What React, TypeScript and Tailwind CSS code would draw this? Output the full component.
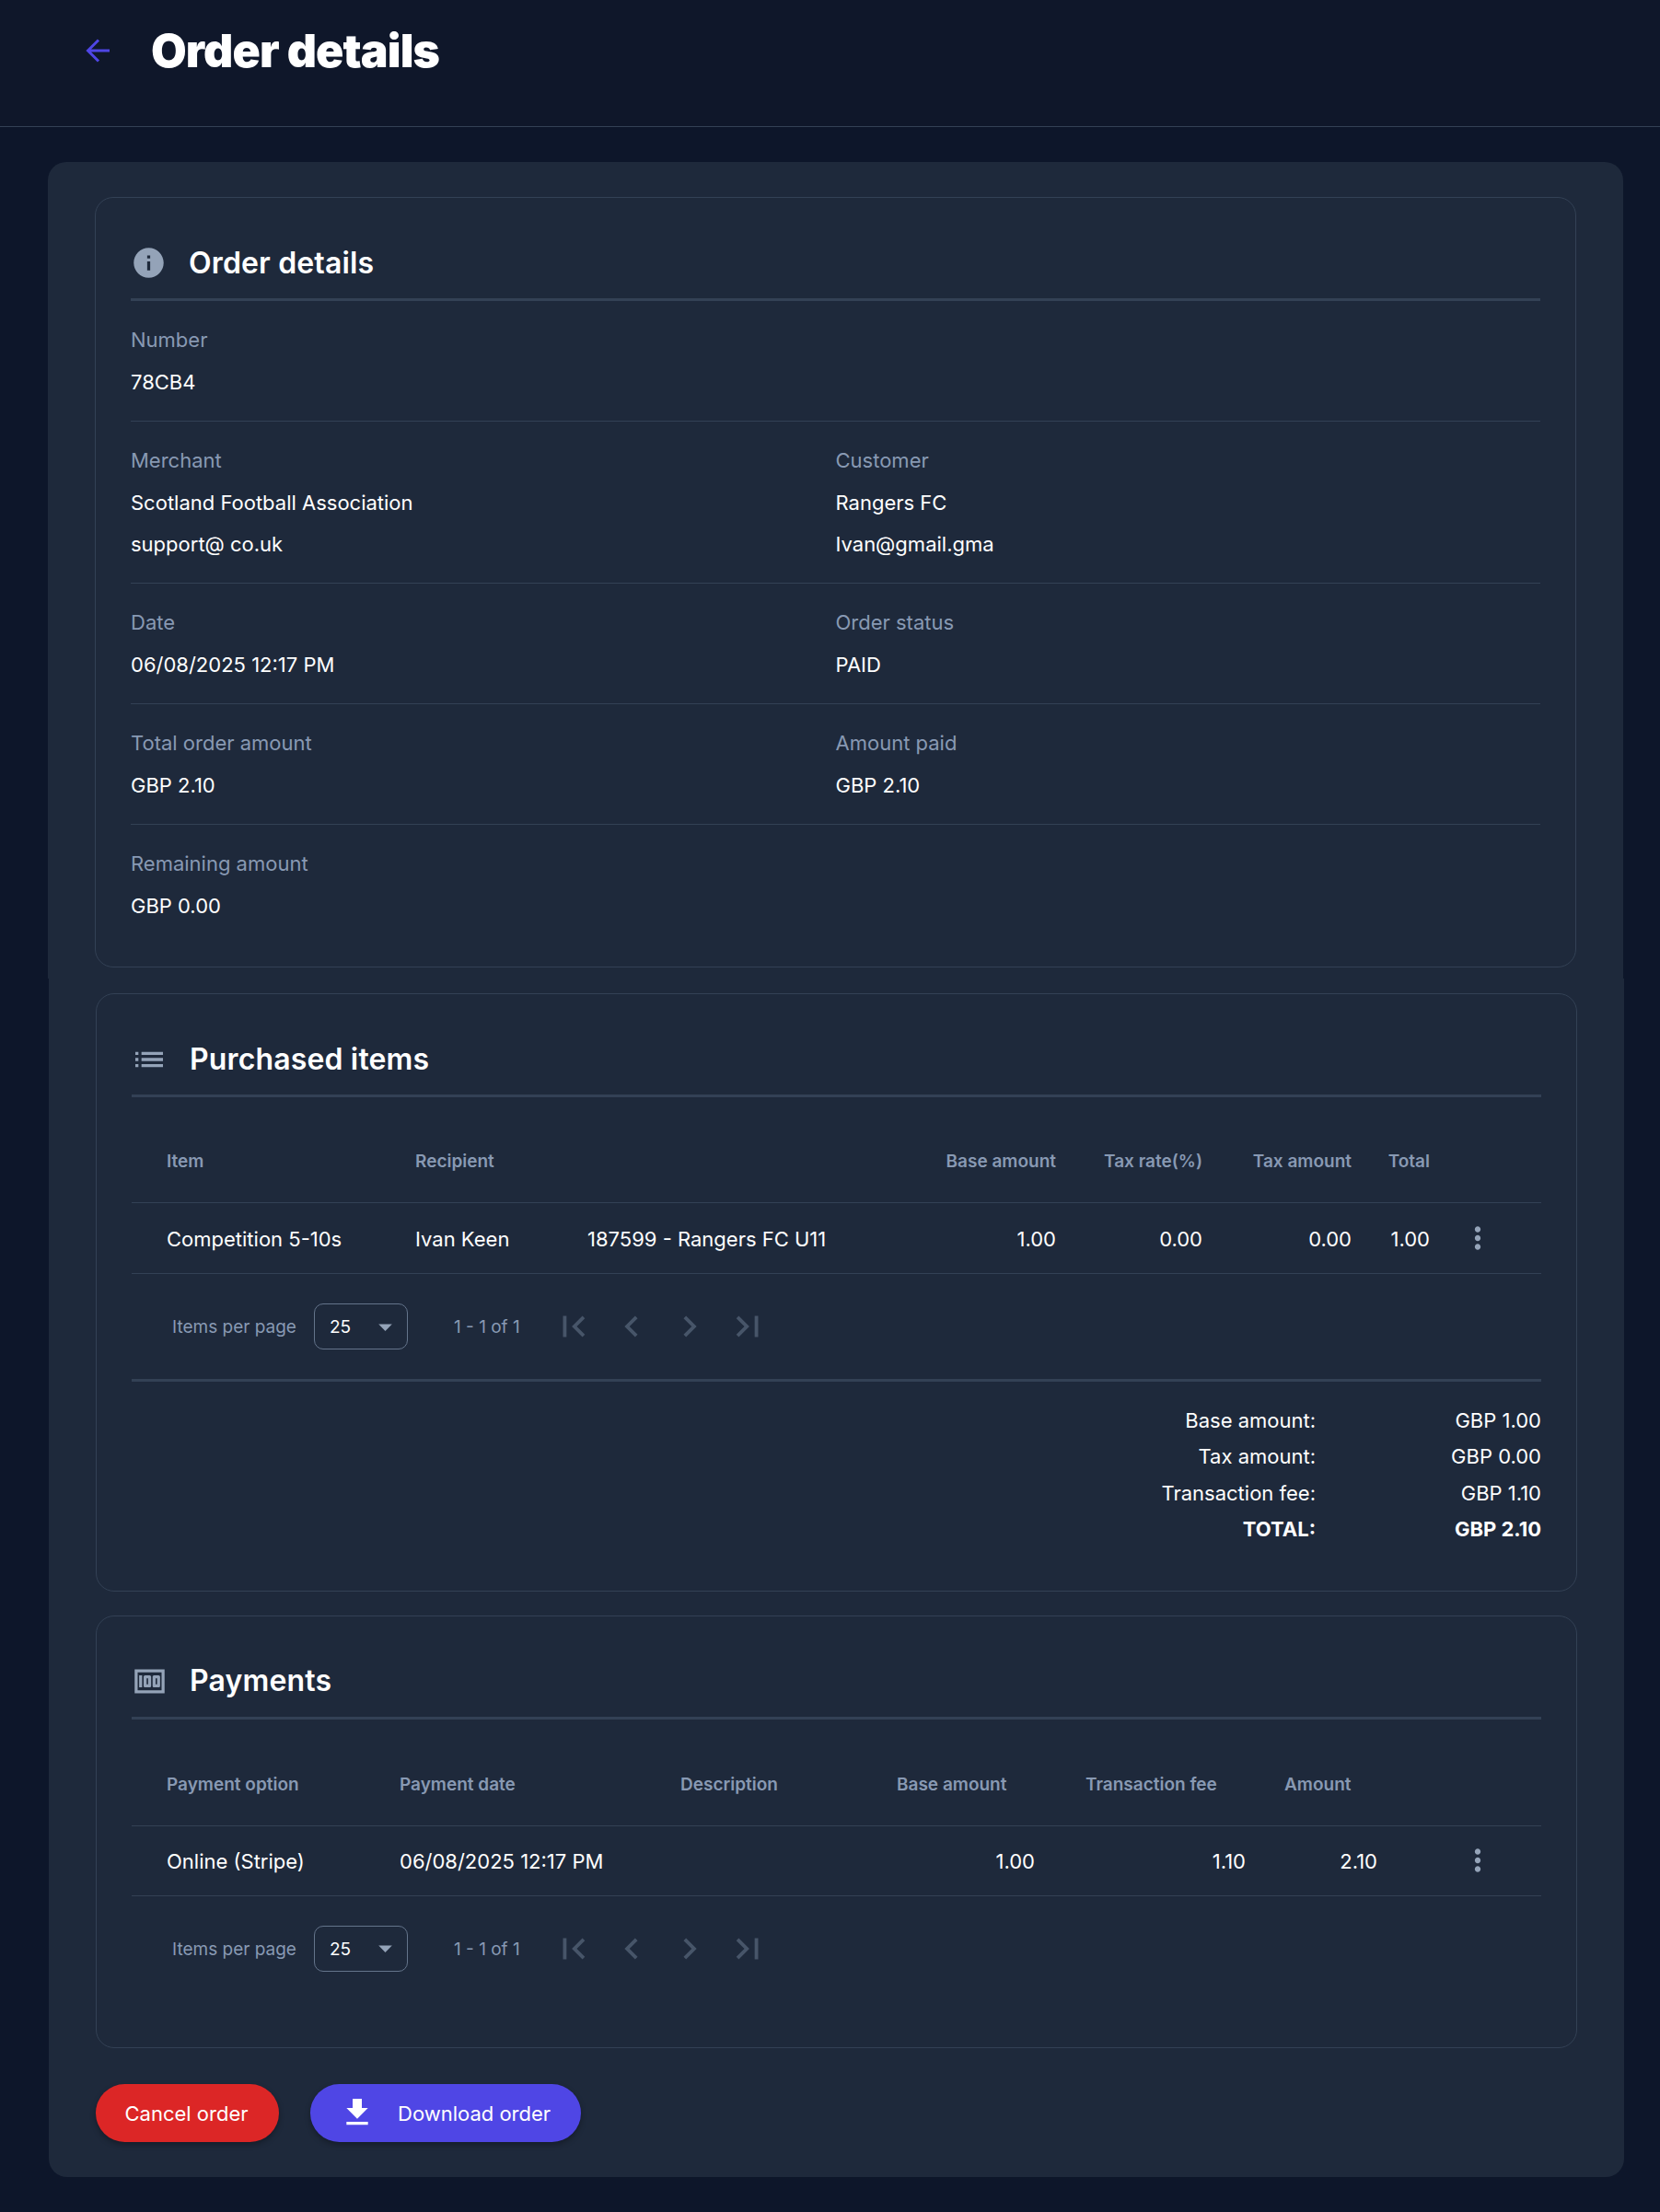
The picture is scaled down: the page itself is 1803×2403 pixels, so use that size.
import React from "react";
import {
  MdInfo,
  MdList,
  MdMoney,
  MdMoreVert,
  MdFileDownload,
  MdFirstPage,
  MdLastPage,
  MdChevronLeft,
  MdChevronRight,
  MdArrowDropDown,
} from "react-icons/md";

function Field({ label, lines }: { label: string; lines: string[] }) {
  return (
    <div>
      <div className="h-[46px] leading-[46px] text-[#8899b3]">{label}</div>
      {lines.map((l) => (
        <div key={l} className="h-[45px] leading-[47px] text-white">
          {l}
        </div>
      ))}
    </div>
  );
}

function Row({ children, last }: { children: React.ReactNode; last?: boolean }) {
  return (
    <div className={`grid grid-cols-2 pt-[19px] pb-[20px] ${last ? "" : "border-b border-[#334155]"}`}>{children}</div>
  );
}

function CardHeader({ icon, title }: { icon: React.ReactNode; title: string }) {
  return (
    <div className="flex items-center h-[112px] pt-[32px] border-b-[3px] border-[#334155]">
      <div className="w-[63px] flex items-center text-[#94a3b8]">{icon}</div>
      <h2 className="text-[32px] font-semibold text-white tracking-[0.15px]">{title}</h2>
    </div>
  );
}

function Paginator() {
  return (
    <div className="flex items-center h-[114px] pl-[44px] text-[19px]">
      <span className="text-[#8899b3] w-[154px] pt-[2px]">Items per page</span>
      <div className="w-[102px] h-[50px] rounded-[10px] border border-[#64748b] flex items-center justify-between pl-[16px] pr-[6px] text-white">
        <span className="pt-[2px]">25</span>
        <MdArrowDropDown size={35} className="text-[#94a3b8]" />
      </div>
      <span className="text-[#8899b3] ml-[50px] w-[107px] pt-[2px]">1 - 1 of 1</span>
      <div className="flex items-center gap-[17px] text-[#475569]">
        <MdFirstPage size={46} />
        <MdChevronLeft size={46} />
        <MdChevronRight size={46} />
        <MdLastPage size={46} />
      </div>
    </div>
  );
}

const itemCols = "grid grid-cols-[308px_187px_362px_147px_159px_162px_85px_121px]";
const payCols = "grid grid-cols-[291px_305px_235px_205px_216px_158px_121px]";

export default function App() {
  return (
    <div
      className="min-h-[2403px] bg-[#0d162a] text-[22px]"
      style={{ fontFamily: 'Inter, "Liberation Sans", sans-serif' }}
    >
      <header className="h-[138px] bg-[#0f172a] border-b border-[#334155] flex items-start pt-[25px] pl-[93px]">
        <svg width="27" height="26" viewBox="0 0 27 26" fill="none" stroke="#4f46e5" strokeWidth="3" className="mt-[17px] w-[27px] h-[26px]">
          <path d="M26 13H3M14 1.5 2.5 13 14 24.5" />
        </svg>
        <h1 className="ml-[44px] text-[50px] leading-[60px] font-black text-white tracking-[-0.9px]">Order details</h1>
      </header>

      <main className="mt-[38px]">
        <div className="ml-[52px] w-[1711px] bg-[#1e293b] rounded-t-[20px] pt-[38px] pb-[12px] px-[51px]">
          <section className="rounded-[20px] border border-[#334155] px-[38px] pb-[24px]">
            <CardHeader icon={<MdInfo size={39} />} title="Order details" />
            <Row>
              <Field label="Number" lines={["78CB4"]} />
            </Row>
            <Row>
              <Field label="Merchant" lines={["Scotland Football Association", "support@ co.uk"]} />
              <Field label="Customer" lines={["Rangers FC", "Ivan@gmail.gma"]} />
            </Row>
            <Row>
              <Field label="Date" lines={["06/08/2025 12:17 PM"]} />
              <Field label="Order status" lines={["PAID"]} />
            </Row>
            <Row>
              <Field label="Total order amount" lines={["GBP 2.10"]} />
              <Field label="Amount paid" lines={["GBP 2.10"]} />
            </Row>
            <Row last>
              <Field label="Remaining amount" lines={["GBP 0.00"]} />
            </Row>
          </section>
        </div>

        <div className="ml-[53px] w-[1711px] bg-[#1e293b] rounded-b-[20px] pt-[16px] pb-[38px] px-[51px]">
          <section className="rounded-[20px] border border-[#334155] px-[38px] pb-[46.68px]">
            <CardHeader icon={<MdList size={40} className="-ml-[1px]" />} title="Purchased items" />
            <div className={`${itemCols} items-center h-[115px] pt-[26px] border-b border-[#334155] text-[19px] font-semibold text-[#8899b3]`}>
              <div className="pl-[38px]">Item</div>
              <div>Recipient</div>
              <div />
              <div className="text-right">Base amount</div>
              <div className="text-right">Tax rate(%)</div>
              <div className="text-right">Tax amount</div>
              <div className="text-right">Total</div>
              <div />
            </div>
            <div className={`${itemCols} items-center h-[77px] border-b border-[#334155] text-white`}>
              <div className="pl-[38px] pt-[2px]">Competition 5-10s</div>
              <div className="pt-[2px]">Ivan Keen</div>
              <div className="pt-[2px]">187599 - Rangers FC U11</div>
              <div className="text-right pt-[2px]">1.00</div>
              <div className="text-right pt-[2px]">0.00</div>
              <div className="text-right pt-[2px]">0.00</div>
              <div className="text-right pt-[2px]">1.00</div>
              <div className="pl-[33px] text-[#94a3b8]"><MdMoreVert size={38} /></div>
            </div>
            <div className="border-b-[3px] border-[#334155]">
              <Paginator />
            </div>
            <div className="pt-[23px] grid grid-cols-[1fr_245px] text-white text-right leading-[39.33px]">
              <div>Base amount:</div>
              <div>GBP 1.00</div>
              <div>Tax amount:</div>
              <div>GBP 0.00</div>
              <div>Transaction fee:</div>
              <div>GBP 1.10</div>
              <div className="font-bold">TOTAL:</div>
              <div className="font-bold">GBP 2.10</div>
            </div>
          </section>

          <section className="mt-[26px] rounded-[20px] border border-[#334155] px-[38px] pb-[50px]">
            <CardHeader icon={<MdMoney size={39} />} title="Payments" />
            <div className={`${payCols} items-center h-[116px] pt-[28px] border-b border-[#334155] text-[19px] font-semibold text-[#8899b3]`}>
              <div className="pl-[38px]">Payment option</div>
              <div>Payment date</div>
              <div>Description</div>
              <div>Base amount</div>
              <div>Transaction fee</div>
              <div>Amount</div>
              <div />
            </div>
            <div className={`${payCols} items-center h-[76px] border-b border-[#334155] text-white`}>
              <div className="pl-[38px] pt-[2px]">Online (Stripe)</div>
              <div className="pt-[2px]">06/08/2025 12:17 PM</div>
              <div />
              <div className="text-right pr-[55px] pt-[2px]">1.00</div>
              <div className="text-right pr-[42px] pt-[2px]">1.10</div>
              <div className="text-right pr-[57px] pt-[2px]">2.10</div>
              <div className="pl-[33px] text-[#94a3b8]"><MdMoreVert size={38} /></div>
            </div>
            <Paginator />
          </section>

          <div className="mt-[39px] flex gap-[34px]">
            <button className="h-[63px] w-[199px] pt-[2px] pr-[2px] rounded-full bg-[#dc2626] text-white shadow-[0_3px_6px_rgba(0,0,0,0.3)]">Cancel order</button>
            <button className="h-[63px] w-[294px] rounded-full bg-[#4f46e5] text-white shadow-[0_3px_6px_rgba(0,0,0,0.3)] flex items-center pl-[31px]">
              <MdFileDownload size={40} className="mr-[24px]" />
              <span className="pt-[2px]">Download order</span>
            </button>
          </div>
        </div>
      </main>
    </div>
  );
}
